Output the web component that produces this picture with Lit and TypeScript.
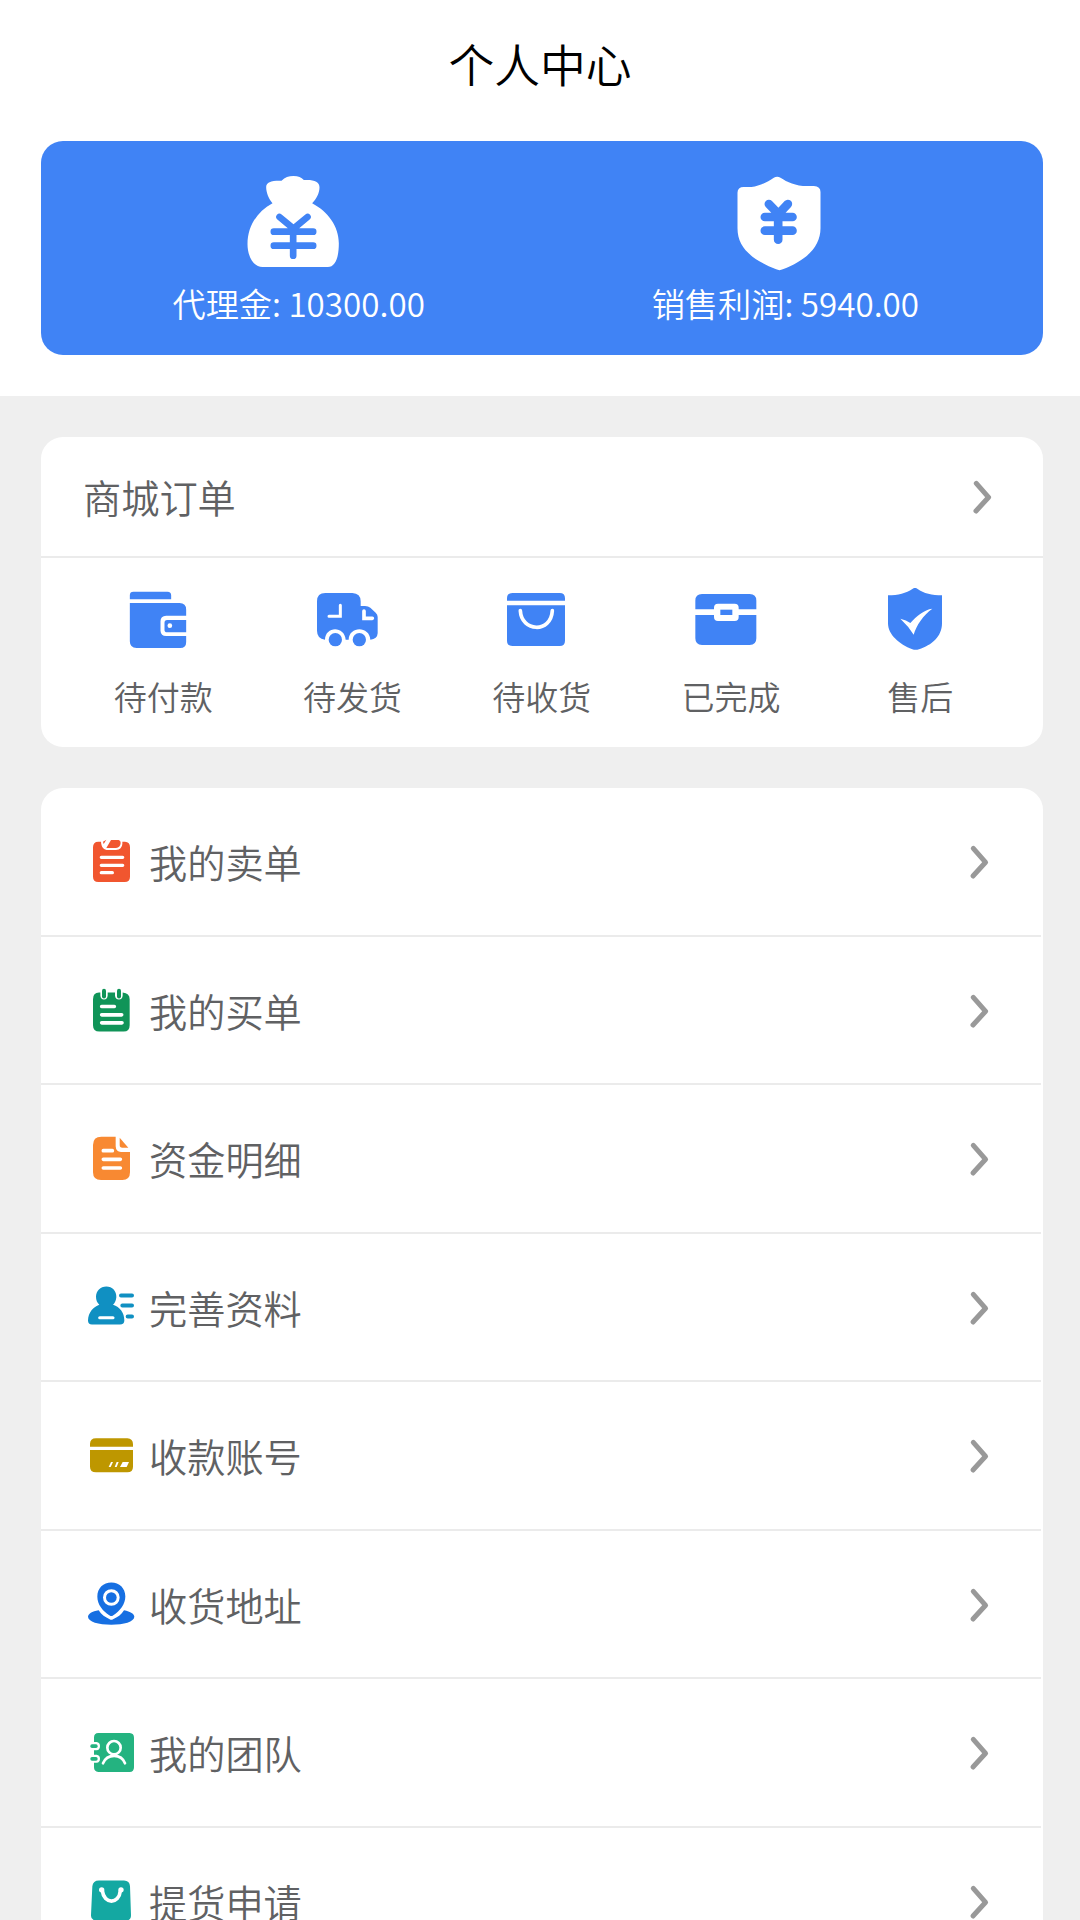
import { LitElement, html, svg, css, SVGTemplateResult } from "lit";
import { customElement } from "lit/decorators.js";

interface Entry {
  label: string;
  box: string;
  art: SVGTemplateResult;
}

const BLUE = "#4083f5";

const stats: Entry[] = [
  {
    label: "代理金: 10300.00",
    box: "37.5 33 300 300",
    art: svg`
      <path fill="#fff" d="M126 130C115 117 107 98 107 81C107 66 124 61 153 62C164 52 174 48 189 48C204 48 212 52 220 60C249 58 267 64 267 82C267 99 258 117 245 130C292 155 325 199 325 250C325 294 314 321 292 321H96C69 321 51 289 51 252C51 199 79 156 126 130Z"/>
      <path fill="none" stroke=${BLUE} stroke-width="20" stroke-linecap="round" d="M147 171L189 206L231 171M130 215H248M130 257H248M188 206V287"/>`,
  },
  {
    label: "销售利润: 5940.00",
    box: "28.5 33 300 300",
    art: svg`
      <path fill="#fff" d="M54 98Q54 81 73 81H96C122 78 145 65 163 53Q173 47 183 53C203 66 228 78 263 78H283Q303 79 303 96V205C303 260 262 300 190 328Q180 333 170 328C98 299 54 264 54 205Z"/>
      <path fill="none" stroke=${BLUE} stroke-width="26" stroke-linecap="round" d="M148 132L177 162L205 132M136 171H219M136 212H219M176 162V239"/>`,
  },
];

const orders: Entry[] = [
  {
    label: "待付款",
    box: "48.5 54 192 192",
    art: svg`
      <path fill=${BLUE} d="M60 88V75Q60 65 71 65H173Q184 65 184 76V88ZM60 99H209Q229 99 229 119V137H169Q152 138 152 154V182Q153 198 169 198H229V216Q229 234 211 234H80Q60 233 60 214Z"/>
      <path fill=${BLUE} d="M229 150V187H172Q164 187 164 179V158Q164 150 172 150Z"/>
      <circle cx="180" cy="167" r="7" fill="#fff"/>`,
  },
  {
    label: "待发货",
    box: "615 54 192 192",
    art: svg`
      <path fill=${BLUE} d="M621 94Q621 69 646 69H727Q752 70 752 94V108H765Q775 108 781 113L797 128Q803 133 803 141V190Q802 208 781 209C779 167 717 167 716 209H707C704 167 646 167 645 209Q621 206 621 182Z"/>
      <circle cx="676" cy="209" r="20" fill=${BLUE}/>
      <circle cx="748" cy="209" r="20" fill=${BLUE}/>
      <path fill="none" stroke="#fff" stroke-width="9" stroke-linecap="round" d="M691 106V139H657"/>
      <path fill="none" stroke="#fff" stroke-width="11" stroke-linecap="round" d="M762 123V145H787"/>`,
  },
  {
    label: "待收货",
    box: "43 144 192 192",
    art: svg`
      <path fill=${BLUE} d="M52 182.5V175Q52 159 68 159H210Q226 159 226 175V182.5ZM52 196H226V302Q226 318 210 318H68Q52 318 52 302Z"/>
      <path fill="none" stroke="#fff" stroke-width="11" stroke-linecap="round" d="M92 212C95 276 184 281 188 212"/>`,
  },
  {
    label: "已完成",
    box: "611 144 192 192",
    art: svg`
      <path fill=${BLUE} d="M615 208V182Q615 162 635 162H778Q798 162 798 182V208H745V203Q745 191 733 191H683Q671 191 671 203V208ZM615 225H671V231Q671 243 683 243H733Q745 243 745 231V225H798V295Q798 315 778 315H635Q615 314 615 295Z"/>
      <rect x="690" y="209" width="36" height="16" fill=${BLUE}/>`,
  },
  {
    label: "售后",
    box: "1179 144 192 192",
    art: svg`
      <path fill=${BLUE} d="M1194 166C1224 166 1249 159 1267 147Q1275 140 1283 147C1300 160 1327 166 1356 166V250C1356 290 1325 316 1287 328Q1277 331 1267 328C1228 313 1194 284 1194 250Z"/>
      <path fill="#fff" d="M1231 236Q1249 240 1261 249C1280 228 1302 209 1327 206C1300 225 1279 256 1271 284Q1256 259 1231 236Z"/>`,
  },
];

const menu: Entry[] = [
  {
    label: "我的卖单",
    box: "171 174 144 144",
    art: svg`
      <path fill="#f1562f" d="M189 202Q189 185 205 185H213C214 202 222 210 234 210H258Q276 209 277 192V185H285Q300 186 300 202V290Q300 306 284 306H205Q189 306 189 290Z"/>
      <path fill="#f1562f" d="M243 180H266Q272 181 272 189Q271 203 258 204H229Z"/>
      <path fill="#f1562f" d="M219 185L229 179L221 192Z"/>
      <path stroke="#fff" stroke-width="10" stroke-linecap="round" d="M214 232H278M214 256H278M214 278H247"/>`,
  },
  {
    label: "我的买单",
    box: "171 619.5 144 144",
    art: svg`
      <path fill="#109458" d="M189 656Q189 636 207 636H211V645Q212 657 222 657Q232 657 233 645V636H255V645Q256 657 267 657Q277 657 278 645V636Q299 638 299 656V734Q299 753 281 753H208Q189 753 189 734Z"/>
      <rect x="216" y="625" width="12" height="29" rx="6" fill="#109458"/>
      <rect x="261" y="625" width="12" height="29" rx="6" fill="#109458"/>
      <path stroke="#fff" stroke-width="11" stroke-linecap="round" d="M215 678H253M215 703H275M215 727H276"/>`,
  },
  {
    label: "资金明细",
    box: "171 105 144 144",
    art: svg`
      <path fill="#f88932" d="M214 110H257V139Q258 156 273 156H300V217Q300 240 277 240H213Q189 240 189 217V135Q189 110 214 110Z"/>
      <path fill="#f88932" d="M269 113L295 143H277Q269 143 269 135Z"/>
      <path stroke="#fff" stroke-width="11" stroke-linecap="round" d="M220 152H247M220 178H271M220 204H271"/>`,
  },
  {
    label: "完善资料",
    box: "171 550.5 144 144",
    art: svg`
      <path fill="#1090c2" d="M229 558C247 558 260 572 259 590C258 601 254 608 249 613C270 620 283 637 283 660Q283 672 270 672H186Q174 672 174 660C175 635 190 620 208 613C201 607 198 599 198 589C198 571 211 558 229 558Z"/>
      <path stroke="#fff" stroke-width="9" stroke-linecap="round" d="M209 652H249"/>
      <path stroke="#1090c2" stroke-width="12" stroke-linecap="round" d="M273 585H306M277 615H306M293 648H306"/>`,
  },
  {
    label: "收款账号",
    box: "171 996 144 144",
    art: svg`
      <path fill="#be9700" d="M180 1040V1032Q180 1015 198 1015H292Q309 1016 309 1033V1040ZM180 1050H309V1100Q309 1117 292 1117H198Q180 1117 180 1100Z"/>
      <path fill="#fff" d="M243 1086H249L242 1101H236ZM260 1086H266L260 1101H254ZM278 1086H297L290 1101H270Z"/>`,
  },
  {
    label: "收货地址",
    box: "171 241.5 144 144",
    art: svg`
      <path fill="#166fe2" fill-rule="evenodd" d="M244 246C268 246 286 263 286 288C286 311 270 332 249 345Q244 348 239 345C218 332 202 312 202 288C202 263 220 246 244 246ZM244 266A25 25 0 1 0 244 316A25 25 0 1 0 244 266Z"/>
      <circle cx="244" cy="291" r="16" fill="#166fe2"/>
      <path fill="#166fe2" d="M206 329C214 342 226 350 239 356Q244 359 249 356C263 350 274 342 282 329C302 333 313 340 313 349C313 364 281 373 244 373C206 373 174 364 174 349C174 340 186 332 206 329Z"/>`,
  },
  {
    label: "我的团队",
    box: "171 687 144 144",
    art: svg`
      <path fill="#24b380" d="M205 699H299Q312 700 312 713V802Q312 816 299 816H205Q192 815 192 802V788H200Q210 787 210 776Q210 765 200 764H192V751H200Q210 750 210 738Q210 728 200 726H192V713Q192 699 205 699Z"/>
      <rect x="181" y="733" width="22" height="11" rx="5" fill="#24b380"/>
      <rect x="181" y="771" width="22" height="11" rx="5" fill="#24b380"/>
      <g fill="none" stroke="#fff" stroke-width="8" stroke-linecap="round"><circle cx="252" cy="743" r="20"/><path d="M219 790C231 760 274 760 285 790"/></g>`,
  },
  {
    label: "提货申请",
    box: "171 1132.5 144 144",
    art: svg`
      <path fill="#14a8a2" d="M207 1140H282Q299 1141 300 1157L303 1244Q303 1260 288 1260H198Q182 1259 183 1244L187 1157Q189 1140 207 1140Z"/>
      <path fill="none" stroke="#fff" stroke-width="11" stroke-linecap="round" d="M217 1171C222 1212 267 1212 271 1171"/>
      <circle cx="215" cy="1168" r="8" fill="#fff"/>
      <circle cx="273" cy="1168" r="8" fill="#fff"/>`,
  },
];

const chevron = html`<svg class="chevron" viewBox="0 0 24 40">
  <path d="M5.3 6.3L17.6 20.3L5 34" fill="none" stroke="#999" stroke-width="5" stroke-linecap="round" stroke-linejoin="round" />
</svg>`;

@customElement("app-root")
export class AppRoot extends LitElement {
  static styles = css`
    :host {
      display: block;
      height: 1920px;
      overflow: hidden;
      background: #efefef;
      color: #606163;
      font-family: "Noto Sans CJK SC", sans-serif;
      font-weight: 350;
    }
    svg {
      display: block;
      flex: none;
    }
    .top {
      box-sizing: border-box;
      height: 396px;
      padding: 0 37px 0 41px;
      background: #fff;
    }
    .title {
      margin: 0 -37px 0 -41px;
      height: 141px;
      box-sizing: border-box;
      padding-top: 32px;
      font-size: 45.8px;
      font-weight: 350;
      line-height: 62px;
      text-align: center;
      color: #000;
    }
    .balance {
      box-sizing: border-box;
      display: flex;
      justify-content: space-between;
      height: 214px;
      padding: 30px 124px 0 131.5px;
      border-radius: 22px;
      background: #4083f5;
      color: #fff;
    }
    .stat {
      display: flex;
      flex-direction: column;
      align-items: center;
      gap: 8px;
      font-size: 33.2px;
      line-height: 48px;
      white-space: nowrap;
    }
    .stat-icon {
      width: 100px;
      height: 100px;
      margin-right: 12px;
    }
    .card {
      margin: 41px 37px 0 41px;
      border-radius: 22px;
      background: #fff;
    }
    .orders {
      height: 310px;
    }
    .orders-head {
      box-sizing: border-box;
      display: flex;
      align-items: center;
      justify-content: space-between;
      height: 121px;
      padding: 0 48.5px 0 42px;
      border-bottom: 2px solid #ebebeb;
      font-size: 38.2px;
      line-height: 56px;
    }
    .orders-head span {
      margin-top: 1px;
    }
    .order-grid {
      display: grid;
      grid-template-columns: repeat(5, 1fr);
      padding: 30px 28px 0 27.5px;
    }
    .order {
      display: flex;
      flex-direction: column;
      align-items: center;
      gap: 22px;
      font-size: 33px;
      line-height: 45px;
    }
    .order-icon {
      width: 64px;
      height: 64px;
      margin-right: 11px;
    }
    .row {
      box-sizing: border-box;
      display: flex;
      align-items: center;
      height: 148.5px;
      margin-right: 2px;
      padding: 0 49.5px 0 46px;
      border-bottom: 2px solid #ebebeb;
      font-size: 38.2px;
    }
    .row-icon {
      width: 48px;
      height: 48px;
      margin: 1.5px 14px 0 0;
    }
    .row-label {
      flex: 1;
      margin-top: 1px;
    }
    .chevron {
      width: 24px;
      height: 40px;
    }
    .row .chevron {
      margin-top: 2px;
    }
  `;

  render() {
    return html`
      <header class="top">
        <h1 class="title">个人中心</h1>
        <section class="balance">
          ${stats.map(
            (s) => html`<div class="stat">
              <svg class="stat-icon" viewBox=${s.box}>${s.art}</svg>
              <span>${s.label}</span>
            </div>`
          )}
        </section>
      </header>
      <section class="card orders">
        <div class="orders-head"><span>商城订单</span>${chevron}</div>
        <div class="order-grid">
          ${orders.map(
            (o) => html`<div class="order">
              <svg class="order-icon" viewBox=${o.box}>${o.art}</svg>
              <span>${o.label}</span>
            </div>`
          )}
        </div>
      </section>
      <nav class="card">
        ${menu.map(
          (m) => html`<div class="row">
            <svg class="row-icon" viewBox=${m.box}>${m.art}</svg>
            <span class="row-label">${m.label}</span>
            ${chevron}
          </div>`
        )}
      </nav>
    `;
  }
}
